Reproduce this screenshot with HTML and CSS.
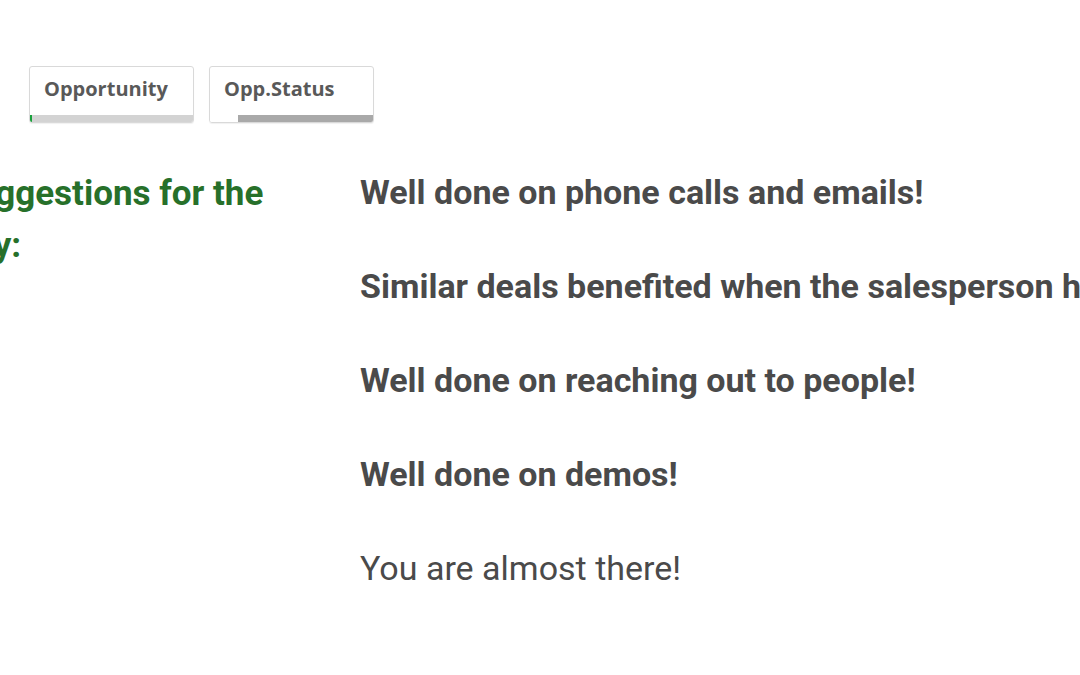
FILE: index.html
```html
<!DOCTYPE html>
<html lang="en">
<head>
  <meta charset="UTF-8" />
  <title>Opportunity coaching</title>
  <link rel="stylesheet" href="styles.css">
</head>
<body>
  <header class="filters">
    <div class="chip">
      <span class="chip-label">Opportunity</span>
      <div class="chip-bar">
        <div class="chip-bar-fill green" style="width: 2px"></div>
        <div class="chip-bar-rest light"></div>
      </div>
    </div>
    <div class="chip">
      <span class="chip-label">Opp.Status</span>
      <div class="chip-bar">
        <div class="chip-bar-fill white" style="width: 28px"></div>
        <div class="chip-bar-rest dark"></div>
      </div>
    </div>
  </header>

  <main class="content">
    <h2 class="suggest-title">Our key suggestions for the opportunity:</h2>
    <div class="suggest-list">
      <p class="tip">Well done on phone calls and emails!</p>
      <p class="tip">Similar deals benefited when the salesperson had more meetings.</p>
      <p class="tip">Well done on reaching out to people!</p>
      <p class="tip">Well done on demos!</p>
      <p class="tip plain">You are almost there!</p>
    </div>
  </main>
</body>
</html>
```

FILE: styles.css
```css
html, body {
  margin: 0;
  background: #fff;
  overflow: hidden;
}
body {
  font-family: Roboto, 'Liberation Sans', sans-serif;
  color: #4a4a4a;
  width: 1080px;
  height: 675px;
}
.filters {
  display: flex;
  gap: 15px;
  padding: 66px 0 0 29px;
}
.chip {
  width: 163px;
  height: 55px;
  border: 1px solid #d9d9d9;
  border-radius: 3px;
  box-shadow: 0 1px 1px rgba(0,0,0,0.06);
  display: flex;
  flex-direction: column;
  overflow: hidden;
}
.chip-label {
  flex: 1;
  font-family: 'Open Sans', sans-serif;
  font-weight: 700;
  font-size: 20px;
  color: #595959;
  padding: 8px 0 0 14px;
}
.chip-bar {
  display: flex;
  height: 7px;
}
.chip-bar-rest {
  flex: 1;
}
.green { background: #1aa03c; }
.white { background: #fff; }
.light { background: #d3d3d3; }
.dark { background: #a9a9a9; }

.content {
  display: flex;
  margin-top: 43px;
  margin-left: -171px;
}
.suggest-title {
  width: 450px;
  flex: none;
  margin: 0 81px 0 0;
  padding-top: 2px;
  font-size: 35px;
  font-weight: 700;
  line-height: 52px;
  color: #27702a;
}
.suggest-list {
  flex: none;
  white-space: nowrap;
}
.tip {
  margin: 0 0 42px;
  font-size: 34px;
  font-weight: 700;
  line-height: 52px;
}
.tip.plain {
  font-weight: 400;
}
```
